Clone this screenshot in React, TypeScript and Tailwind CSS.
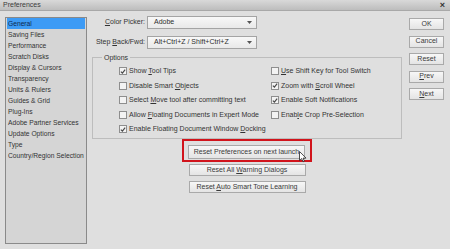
const categories = [
  "General",
  "Saving Files",
  "Performance",
  "Scratch Disks",
  "Display & Cursors",
  "Transparency",
  "Units & Rulers",
  "Guides & Grid",
  "Plug-Ins",
  "Adobe Partner Services",
  "Update Options",
  "Type",
  "Country/Region Selection",
]

function Box({ checked }: { checked?: boolean }) {
  return (
    <span className="w-[8px] h-[8px] shrink-0 border border-[#8e8e8e] bg-[#f3f3f3] flex items-center justify-center">
      {checked && (
        <svg width="7" height="7" viewBox="0 0 7 7">
          <path d="M1 3.6 L2.8 5.4 L6 1.2" fill="none" stroke="#4a4a4a" strokeWidth="1.4" />
        </svg>
      )}
    </span>
  )
}

function Option({ checked, children }: { checked?: boolean; children: React.ReactNode }) {
  return (
    <div className="h-[14.5px] flex items-center gap-[2px] whitespace-nowrap">
      <Box checked={checked} />
      <span>{children}</span>
    </div>
  )
}

function Btn({ children, className = "" }: { children: React.ReactNode; className?: string }) {
  return (
    <div
      className={
        "flex items-center justify-center border border-[#a9a9a9] bg-linear-to-b from-[#f7f7f7] to-[#e4e4e4] text-[#3a3a3a] whitespace-nowrap " +
        className
      }
    >
      <span>{children}</span>
    </div>
  )
}

function Select({ value }: { value: string }) {
  return (
    <div className="w-[110px] h-[13px] border border-[#a4a4a4] bg-linear-to-b from-[#f8f8f8] to-[#e9e9e9] flex items-center pl-[6px] pr-[4px]">
      <span className="flex-1 text-[#2e2e2e]">{value}</span>
      <svg width="5" height="3" viewBox="0 0 5 3">
        <path d="M0 0 H5 L2.5 3 Z" fill="#555" />
      </svg>
    </div>
  )
}

export default function App() {
  return (
    <div
      className="w-[450px] h-[249px] bg-[#dfdfdf] flex flex-col text-[7px] text-[#333] overflow-hidden relative"
      style={{ fontFamily: '"Liberation Sans", Arial, sans-serif' }}
    >
      {/* title bar */}
      <div className="h-[11px] shrink-0 bg-linear-to-b from-[#d9d9d9] to-[#bdbdbd] border-b border-[#a8a8a8] flex items-center pl-[3px] pr-[5px]">
        <span className="flex-1 text-[#3c3c3c]">Preferences</span>
        <span className="text-[9px] font-bold leading-none text-[#333]">×</span>
      </div>

      <div className="flex flex-1">
        {/* category list */}
        <div className="ml-[5px] mt-[6px] w-[82px] h-[227px] border border-[#8a8a8a] bg-[#d5d5d5] px-[1px] text-[6.7px]">
          {categories.map((c, i) => (
            <div
              key={c}
              className={
                "h-[11px] leading-[11px] pl-[1px] whitespace-nowrap " +
                (i === 0 ? "bg-[#3d9bf5] text-[#0d2a52]" : "text-[#333]")
              }
            >
              {c}
            </div>
          ))}
        </div>

        {/* main column */}
        <div className="ml-[5px] w-[310px] flex flex-col">
          <div className="mt-[4.5px] flex flex-col gap-[7px]">
            <div className="flex items-center gap-[2px]">
              <span className="w-[53px] text-right">
                <u>C</u>olor Picker:
              </span>
              <Select value="Adobe" />
            </div>
            <div className="flex items-center gap-[2px]">
              <span className="w-[53px] text-right whitespace-nowrap">
                Step <u>B</u>ack/Fwd:
              </span>
              <Select value="Alt+Ctrl+Z / Shift+Ctrl+Z" />
            </div>
          </div>

          {/* options group */}
          <div className="mt-[8.5px] h-[82px] border border-[#bdbdbd] relative">
            <span className="absolute -top-[5px] left-[9px] px-[2px] bg-[#dfdfdf] leading-[9px]">Options</span>
            <div className="pt-[6px] pl-[26px] grid grid-cols-[152px_1fr]">
              <Option checked>
                Show <u>T</u>ool Tips
              </Option>
              <Option>
                <u>U</u>se Shift Key for Tool Switch
              </Option>
              <Option>
                Disable Smart <u>O</u>bjects
              </Option>
              <Option checked>
                Zoom with <u>S</u>croll Wheel
              </Option>
              <Option>
                Select <u>M</u>ove tool after committing text
              </Option>
              <Option checked>Enable Soft Notifications</Option>
              <Option>
                Allow <u>F</u>loating Documents in Expert Mode
              </Option>
              <Option>
                Enab<u>l</u>e Crop Pre-Selection
              </Option>
              <Option checked>
                Enable Floating Document Window <u>D</u>ocking
              </Option>
            </div>
          </div>

          {/* reset buttons */}
          <div className="flex flex-col items-center">
            <div className="border-2 border-[#d1141c] pl-[4px] pr-[5px] pt-[4px] pb-[1px] relative">
              <Btn className="w-[117px] h-[14px]">Reset Preferences on next launch</Btn>
              <svg className="absolute left-[115px] top-[10px]" width="8" height="12" viewBox="0 0 8 12">
                <path d="M0.5 0.5 V9.5 L2.6 7.6 L4 10.8 L5.4 10.2 L4.1 7.1 L7 7.1 Z" fill="#fff" stroke="#222" strokeWidth="0.8" />
              </svg>
            </div>
            <Btn className="w-[117px] h-[12px] mt-[2px]">
              Reset All <u>W</u>arning Dialogs
            </Btn>
            <Btn className="w-[117px] h-[12px] mt-[5px]">
              Reset <u>A</u>uto Smart Tone Learning
            </Btn>
          </div>
        </div>

        {/* dialog buttons */}
        <div className="ml-[7px] mt-[7px] flex flex-col gap-[5.5px]">
          <Btn className="w-[35px] h-[12px]">OK</Btn>
          <Btn className="w-[35px] h-[12px]">Cancel</Btn>
          <Btn className="w-[35px] h-[12px]">Reset</Btn>
          <Btn className="w-[35px] h-[12px]">
            <u>P</u>rev
          </Btn>
          <Btn className="w-[35px] h-[12px]">
            <u>N</u>ext
          </Btn>
        </div>
      </div>
    </div>
  )
}
